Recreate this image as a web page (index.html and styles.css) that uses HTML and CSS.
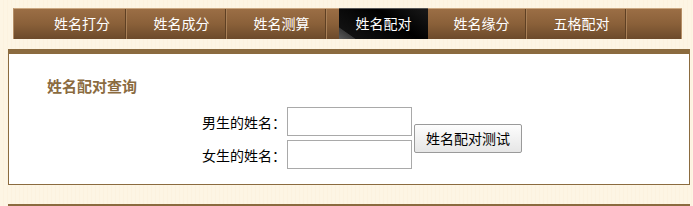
FILE: index.html
```html
<!DOCTYPE html>
<html lang="zh-CN">
<head>
  <meta charset="UTF-8">
  <title>姓名配对</title>
  <link rel="stylesheet" href="styles.css">
</head>
<body>
<div class="page">
  <ul class="nav">
    <li class="first"><a href="#">姓名打分</a></li>
    <li><a href="#">姓名成分</a></li>
    <li><a href="#">姓名测算</a></li>
    <li class="active"><a href="#">姓名配对</a></li>
    <li><a href="#">姓名缘分</a></li>
    <li><a href="#">五格配对</a></li>
    <li class="last"></li>
  </ul>

  <div class="box">
    <h2>姓名配对查询</h2>
    <form class="pair-form">
      <label for="boy">男生的姓名：</label>
      <input type="text" id="boy">
      <button type="button">姓名配对测试</button>
      <label for="girl">女生的姓名：</label>
      <input type="text" id="girl">
    </form>
  </div>

  <div class="bottom-line"></div>
</div>
</body>
</html>
```

FILE: styles.css
```css
body {
  margin: 0;
  padding: 0;
  font-family: "Noto Sans CJK SC", "Liberation Sans", sans-serif;
  background: #fdf5e4 repeating-linear-gradient(to right, #fdf5e4 0, #fdf5e4 3px, #fcf2df 3px, #fcf2df 4px);
  color: #000;
}

.page {
  padding: 8px 3px 0 8px;
}

.nav {
  list-style: none;
  margin: 0 0 0 5px;
  padding: 0;
  width: 669px;
  height: 31px;
  display: flex;
  box-sizing: border-box;
  background: linear-gradient(to bottom, #9b6e45, #8a6039 50%, #6c4a2b);
  border-top: 1px solid #c9a680;
  border-left: 1px solid #b58e66;
  box-shadow: inset -1px 0 0 #b58e66;
}

.nav li {
  width: 100px;
  flex-shrink: 0;
  box-sizing: border-box;
  padding-left: 12px;
  text-align: center;
  border-right: 1px solid #5e4024;
  box-shadow: 1px 0 0 #a98058;
  position: relative;
}

.nav li.first {
  width: 112px;
  padding-left: 25px;
}

.nav li.last {
  border-right: none;
  box-shadow: none;
  flex: 1;
}

.nav a {
  display: block;
  color: #fff;
  text-decoration: none;
  font-size: 14px;
  line-height: 29px;
}

.nav li.active {
  padding-left: 0;
}

.nav li.active a {
  width: 89px;
  margin: -1px 0 0 13px;
  line-height: 31px;
  padding-left: 0;
  background: linear-gradient(35deg, #5a5a5a 0, #3a3a3a 12%, #111 13%, #000 60%, #1a1a1a);
  box-shadow: inset 0 1px 0 #555;
  position: relative;
  z-index: 1;
}

.box {
  margin-top: 10px;
  width: 682px;
  box-sizing: border-box;
  background: #fff;
  border: 1px solid #8b6b3f;
  border-top: 5px solid #8b6b3f;
  padding: 22px 0 15px 38px;
}

.box h2 {
  margin: 0 0 11px;
  font-size: 15px;
  line-height: 20px;
  font-weight: bold;
  color: #8b6b3f;
}

.pair-form {
  display: grid;
  grid-template-columns: 82px 125px 108px;
  column-gap: 3px;
  row-gap: 4px;
  margin-left: 155px;
  align-items: center;
}

.pair-form label {
  font-size: 14px;
  text-align: right;
  white-space: nowrap;
}

.pair-form input {
  width: 125px;
  height: 29px;
  box-sizing: border-box;
  border: 1px solid #a9a9a9;
  padding: 2px 4px;
  font-size: 13px;
}

.pair-form button {
  grid-column: 3;
  grid-row: 1 / span 2;
  width: 108px;
  height: 29px;
  margin-left: -1px;
  font-family: inherit;
  font-size: 14px;
  color: #000;
  background: linear-gradient(to bottom, #fdfdfd, #e6e6e6);
  border: 1px solid #9a9a9a;
  border-radius: 2px;
}

.bottom-line {
  margin-top: 19px;
  width: 682px;
  height: 3px;
  background: #8b6b3f;
}
```
